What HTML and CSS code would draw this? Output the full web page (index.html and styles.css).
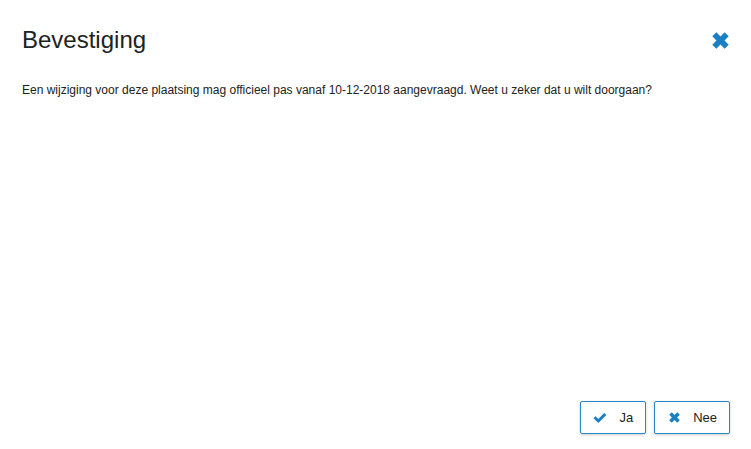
FILE: index.html
```html
<!DOCTYPE html>
<html lang="nl">
<head>
    <meta charset="UTF-8">
    <title>Bevestiging</title>
    <link rel="stylesheet" href="styles.css">
</head>
<body>
    <div class="dialog">
        <div class="dialog-header">
            <h1>Bevestiging</h1>
            <button class="close-btn" title="Sluiten">
                <svg width="17" height="17" viewBox="2.3 2.3 11.4 11.4"><path d="M2.5 5.2 5.2 2.5 8 5.3 10.8 2.5 13.5 5.2 10.7 8 13.5 10.8 10.8 13.5 8 10.7 5.2 13.5 2.5 10.8 5.3 8Z" fill="#1b7fc4"/></svg>
            </button>
        </div>
        <div class="dialog-body">
            <p>Een wijziging voor deze plaatsing mag officieel pas vanaf 10-12-2018 aangevraagd. Weet u zeker dat u wilt doorgaan?</p>
        </div>
        <div class="dialog-footer">
            <button class="btn">
                <span class="icon">
                    <svg width="14" height="12" viewBox="0 0 14 12"><path d="M0.5 6.3 2.6 4.3 5.3 6.9 11.2 1 13.4 3.1 5.3 11Z" fill="#1b7fc4"/></svg>
                </span>
                Ja
            </button>
            <button class="btn">
                <span class="icon">
                    <svg width="11" height="11" viewBox="2.3 2.3 11.4 11.4"><path d="M2.5 5.2 5.2 2.5 8 5.3 10.8 2.5 13.5 5.2 10.7 8 13.5 10.8 10.8 13.5 8 10.7 5.2 13.5 2.5 10.8 5.3 8Z" fill="#1b7fc4"/></svg>
                </span>
                Nee
            </button>
        </div>
    </div>
</body>
</html>
```

FILE: styles.css
```css
body {
    font-family: Arial, "Liberation Sans", sans-serif;
    margin: 0;
    padding: 0;
    background-color: white;
    color: #222;
}

.dialog {
    height: 449px;
    box-sizing: border-box;
    padding: 24px 21px 15px 22px;
    display: flex;
    flex-direction: column;
}

.dialog-header {
    display: flex;
    justify-content: space-between;
    align-items: center;
}

h1 {
    margin: 0;
    font-size: 24px;
    font-weight: normal;
    line-height: 32px;
    color: #222;
}

.close-btn {
    border: none;
    background: none;
    padding: 0;
    margin-right: 1px;
    cursor: pointer;
    display: flex;
}

.dialog-body {
    flex: 1;
}

.dialog-body p {
    margin: 26px 0 0;
    font-size: 12px;
    line-height: 16px;
}

.dialog-footer {
    display: flex;
    justify-content: flex-end;
    gap: 8px;
}

.btn {
    height: 33px;
    padding: 0 12px;
    display: flex;
    align-items: center;
    gap: 12px;
    background-color: white;
    border: 1px solid #2a88c8;
    border-radius: 2px;
    box-shadow: 0 1px 3px rgba(0, 0, 0, 0.2);
    font-family: Arial, "Liberation Sans", sans-serif;
    font-size: 13px;
    color: #222;
    cursor: pointer;
}

.icon {
    width: 14px;
    display: flex;
    justify-content: center;
}
```
